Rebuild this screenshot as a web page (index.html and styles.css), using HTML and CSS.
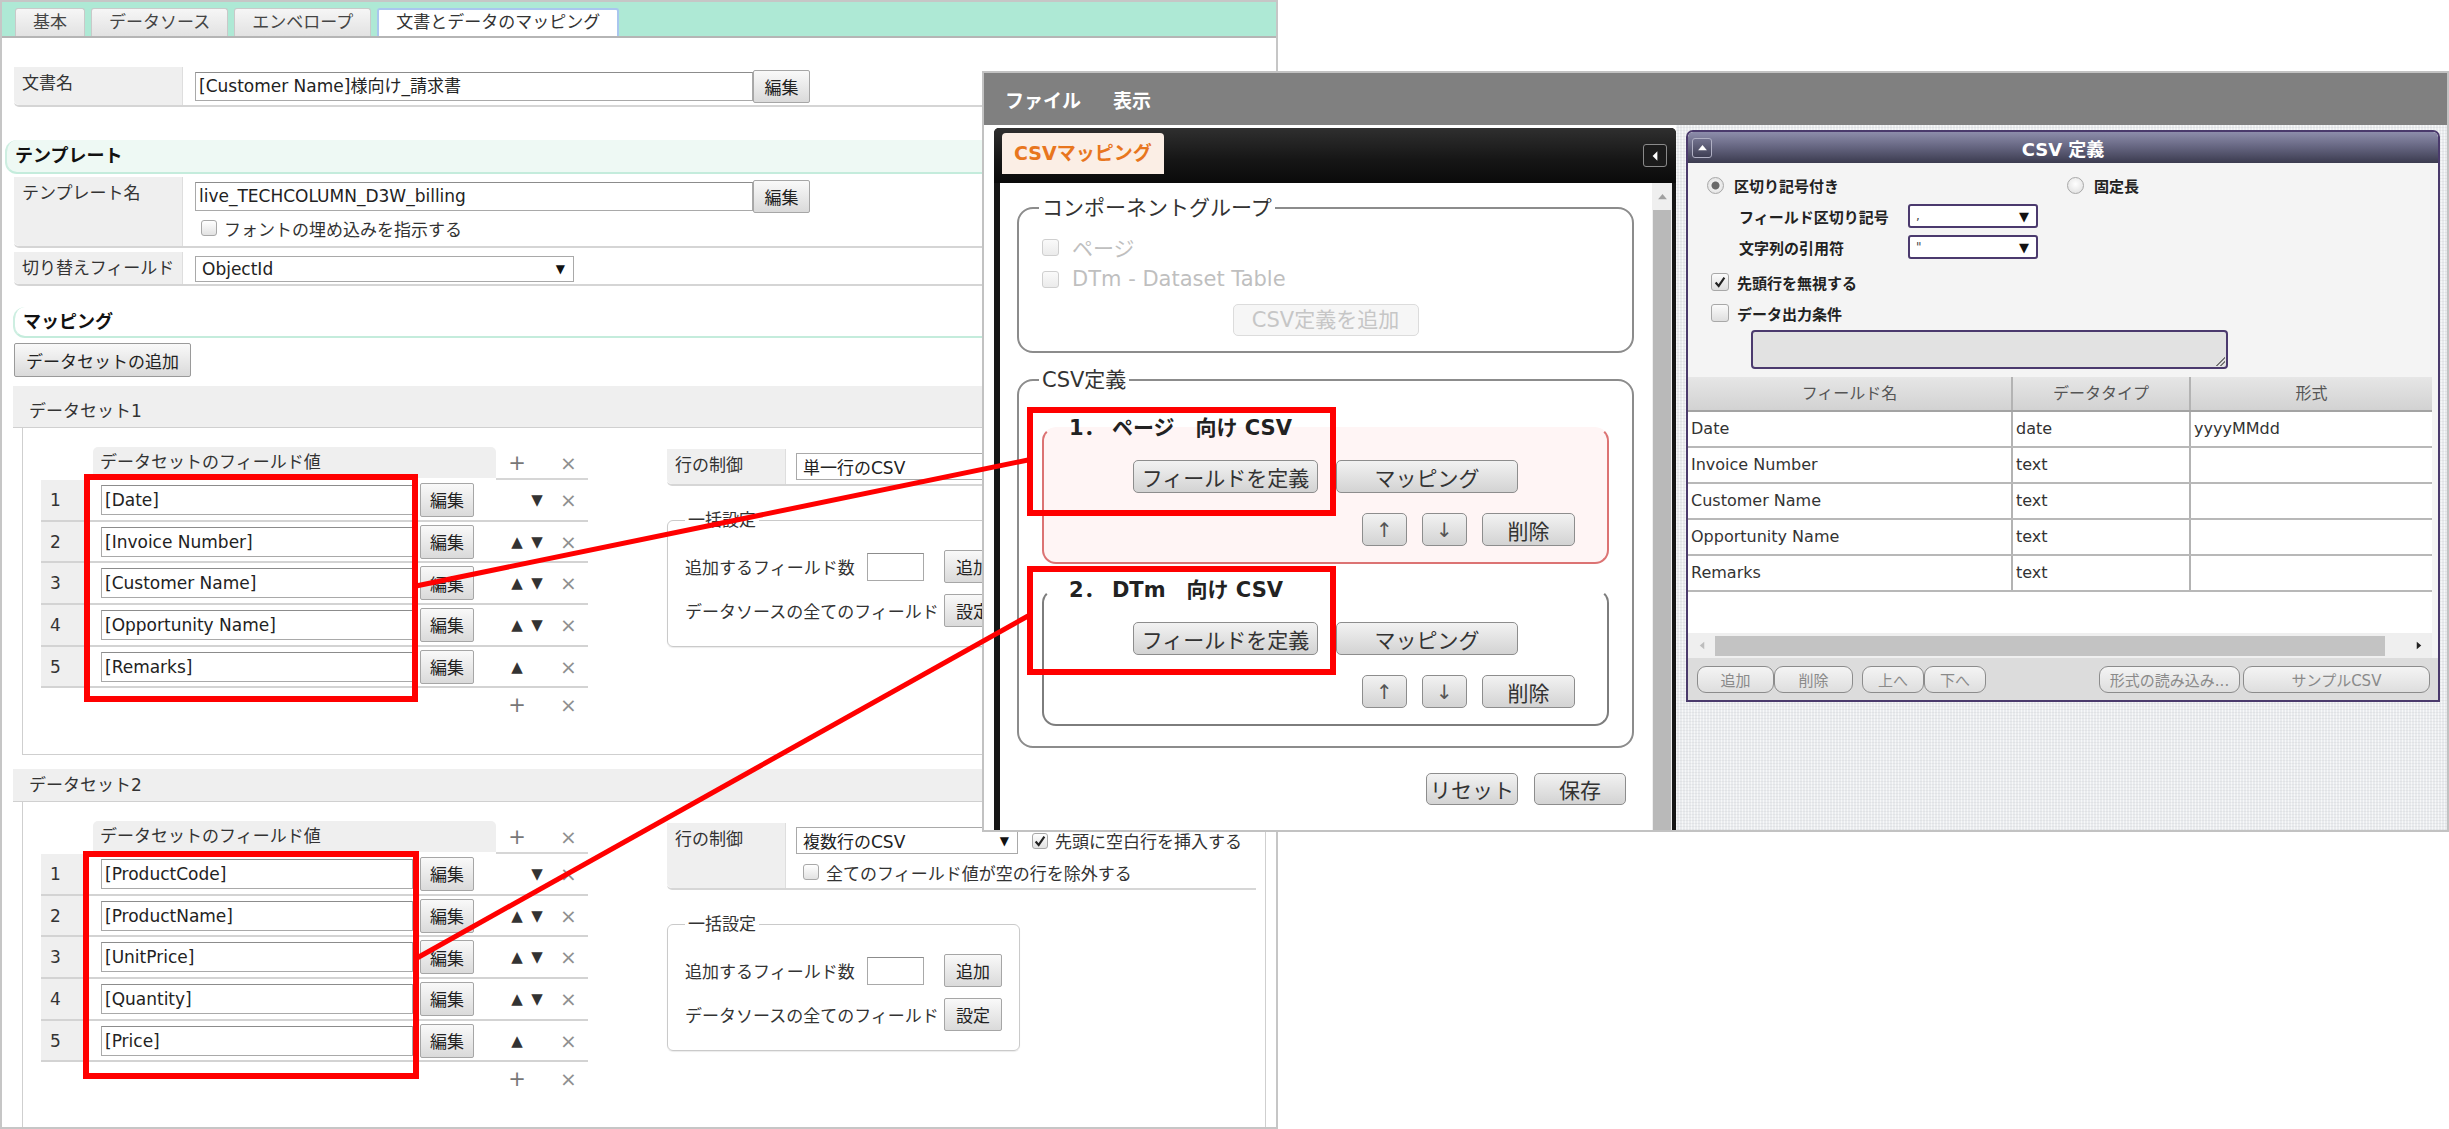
FILE: index.html
```html
<!DOCTYPE html>
<html lang="ja">
<head>
<meta charset="utf-8">
<title>文書とデータのマッピング</title>
<link rel="stylesheet" href="styles.css">
</head>
<body>
<div class="page">
  <div class="tabbar">
    <div class="tab">基本</div>
    <div class="tab">データソース</div>
    <div class="tab">エンベロープ</div>
    <div class="tab active">文書とデータのマッピング</div>
  </div>

  <div class="row r-doc">
    <div class="lbl">文書名</div>
    <div class="val">
      <div class="line"><span class="inp w558">[Customer Name]様向け_請求書</span><span class="btn b-edit">編集</span></div>
    </div>
  </div>

  <div class="sec sec-tpl">テンプレート</div>
  <div class="row r-tpl">
    <div class="lbl">テンプレート名</div>
    <div class="val">
      <div class="line"><span class="inp w558">live_TECHCOLUMN_D3W_billing</span><span class="btn b-edit">編集</span></div>
      <div class="chkline"><span class="cb"></span>フォントの埋め込みを指示する</div>
    </div>
  </div>
  <div class="row r-sw">
    <div class="lbl">切り替えフィールド</div>
    <div class="val sw"><span class="sel w379">ObjectId<span class="arr">▼</span></span></div>
  </div>

  <div class="sec sec-map">マッピング</div>
  <div class="btn b-addds">データセットの追加</div>

  <div class="ds ds1">
    <div class="ds-head">データセット1</div>
    <div class="ds-body">
      <div class="ftable">
        <div class="fhead">
          <div class="c-num"></div>
          <div class="c-main"><div class="fh-title">データセットのフィールド値</div></div>
          <div class="c-arr hline"><span class="ar ic">+</span></div>
          <div class="c-x hline"><span class="x">×</span></div>
        </div>
        <div class="frow"><div class="c-num">1</div><div class="c-main"><span class="inp fin">[Date]</span><span class="btn b-row">編集</span></div><div class="c-arr"><span class="ar"></span><span class="ar">▼</span></div><div class="c-x"><span class="x">×</span></div></div>
        <div class="frow"><div class="c-num">2</div><div class="c-main"><span class="inp fin">[Invoice Number]</span><span class="btn b-row">編集</span></div><div class="c-arr"><span class="ar">▲</span><span class="ar">▼</span></div><div class="c-x"><span class="x">×</span></div></div>
        <div class="frow"><div class="c-num">3</div><div class="c-main"><span class="inp fin">[Customer Name]</span><span class="btn b-row">編集</span></div><div class="c-arr"><span class="ar">▲</span><span class="ar">▼</span></div><div class="c-x"><span class="x">×</span></div></div>
        <div class="frow"><div class="c-num">4</div><div class="c-main"><span class="inp fin">[Opportunity Name]</span><span class="btn b-row">編集</span></div><div class="c-arr"><span class="ar">▲</span><span class="ar">▼</span></div><div class="c-x"><span class="x">×</span></div></div>
        <div class="frow"><div class="c-num">5</div><div class="c-main"><span class="inp fin">[Remarks]</span><span class="btn b-row">編集</span></div><div class="c-arr"><span class="ar">▲</span><span class="ar"></span></div><div class="c-x"><span class="x">×</span></div></div>
        <div class="ffoot"><div class="c-num"></div><div class="c-main"></div><div class="c-arr"><span class="ar ic">+</span></div><div class="c-x"><span class="x">×</span></div></div>
      </div>
      <div class="rcol">
        <div class="rowctl">
          <div class="lbl2">行の制御</div>
          <div class="rc-val">
            <div class="rc-line"><span class="sel s222">単一行のCSV<span class="arr">▼</span></span></div>
          </div>
        </div>
        <fieldset class="bulk">
          <legend>一括設定</legend>
          <div class="bk-row1"><span class="bk-lbl1">追加するフィールド数</span><span class="inp bk-inp"></span><span class="btn b-bk">追加</span></div>
          <div class="bk-row2"><span class="bk-lbl2">データソースの全てのフィールド</span><span class="btn b-bk">設定</span></div>
        </fieldset>
      </div>
    </div>
  </div>

  <div class="ds ds2">
    <div class="ds-head">データセット2</div>
    <div class="ds-body">
      <div class="ftable">
        <div class="fhead">
          <div class="c-num"></div>
          <div class="c-main"><div class="fh-title">データセットのフィールド値</div></div>
          <div class="c-arr hline"><span class="ar ic">+</span></div>
          <div class="c-x hline"><span class="x">×</span></div>
        </div>
        <div class="frow"><div class="c-num">1</div><div class="c-main"><span class="inp fin">[ProductCode]</span><span class="btn b-row">編集</span></div><div class="c-arr"><span class="ar"></span><span class="ar">▼</span></div><div class="c-x"><span class="x">×</span></div></div>
        <div class="frow"><div class="c-num">2</div><div class="c-main"><span class="inp fin">[ProductName]</span><span class="btn b-row">編集</span></div><div class="c-arr"><span class="ar">▲</span><span class="ar">▼</span></div><div class="c-x"><span class="x">×</span></div></div>
        <div class="frow"><div class="c-num">3</div><div class="c-main"><span class="inp fin">[UnitPrice]</span><span class="btn b-row">編集</span></div><div class="c-arr"><span class="ar">▲</span><span class="ar">▼</span></div><div class="c-x"><span class="x">×</span></div></div>
        <div class="frow"><div class="c-num">4</div><div class="c-main"><span class="inp fin">[Quantity]</span><span class="btn b-row">編集</span></div><div class="c-arr"><span class="ar">▲</span><span class="ar">▼</span></div><div class="c-x"><span class="x">×</span></div></div>
        <div class="frow"><div class="c-num">5</div><div class="c-main"><span class="inp fin">[Price]</span><span class="btn b-row">編集</span></div><div class="c-arr"><span class="ar">▲</span><span class="ar"></span></div><div class="c-x"><span class="x">×</span></div></div>
        <div class="ffoot"><div class="c-num"></div><div class="c-main"></div><div class="c-arr"><span class="ar ic">+</span></div><div class="c-x"><span class="x">×</span></div></div>
      </div>
      <div class="rcol">
        <div class="rowctl">
          <div class="lbl2">行の制御</div>
          <div class="rc-val">
            <div class="rc-line"><span class="sel s222">複数行のCSV<span class="arr">▼</span></span><span class="cb checked rc-cb"><svg viewBox="0 0 16 16" width="14" height="14"><path d="M3 8.5 L6.5 12.5 L13 3" fill="none" stroke="#222" stroke-width="2.4"/></svg></span>先頭に空白行を挿入する</div>
            <div class="rc-line2"><span class="cb"></span>全てのフィールド値が空の行を除外する</div>
          </div>
        </div>
        <fieldset class="bulk">
          <legend>一括設定</legend>
          <div class="bk-row1"><span class="bk-lbl1">追加するフィールド数</span><span class="inp bk-inp"></span><span class="btn b-bk">追加</span></div>
          <div class="bk-row2"><span class="bk-lbl2">データソースの全てのフィールド</span><span class="btn b-bk">設定</span></div>
        </fieldset>
      </div>
    </div>
  </div>
</div>

<div class="win">
  <div class="menubar"><span>ファイル</span><span>表示</span></div>
  <div class="winbody">
    <div class="lpanel">
      <div class="ltabs">
        <div class="ltab">CSVマッピング</div>
        <div class="collapse"><svg viewBox="0 0 10 14" width="8" height="12"><path d="M8 1 L2 7 L8 13 Z" fill="#fff"/></svg></div>
      </div>
      <div class="lcontent">
        <div class="lmain">
          <fieldset class="grp">
            <legend>コンポーネントグループ</legend>
            <div class="cbrow first"><span class="cb2"></span>ページ</div>
            <div class="cbrow"><span class="cb2"></span>DTm - Dataset Table</div>
            <div class="addbtn">CSV定義を追加</div>
          </fieldset>
          <fieldset class="csvdef">
            <legend>CSV定義</legend>
            <fieldset class="sect sect1">
              <legend class="sl">1．&nbsp;ページ　向け CSV</legend>
              <div class="sb-row1"><span class="sbtn w185">フィールドを定義</span><span class="sbtn w182">マッピング</span></div>
              <div class="sb-row2"><span class="sbtn w45 arrw">↑</span><span class="sbtn w45 arrw">↓</span><span class="sbtn w93">削除</span></div>
            </fieldset>
            <fieldset class="sect sect2">
              <legend class="sl">2．&nbsp;DTm　向け CSV</legend>
              <div class="sb-row1"><span class="sbtn w185">フィールドを定義</span><span class="sbtn w182">マッピング</span></div>
              <div class="sb-row2"><span class="sbtn w45 arrw">↑</span><span class="sbtn w45 arrw">↓</span><span class="sbtn w93">削除</span></div>
            </fieldset>
          </fieldset>
          <div class="lfoot"><span class="sbtn w92 h32">リセット</span><span class="sbtn w92 h32">保存</span></div>
        </div>
        <div class="vscroll">
          <div class="vs-up"><svg viewBox="0 0 12 8" width="11" height="7"><path d="M1 7 L6 1 L11 7 Z" fill="#a0a0a0"/></svg></div>
          <div class="vs-thumb"></div>
        </div>
      </div>
    </div>

    <div class="rarea">
      <div class="rpanel">
        <div class="rhead">
          <div class="rh-left"><span class="rh-btn"><svg viewBox="0 0 12 8" width="11" height="7"><path d="M1 7 L6 1 L11 7 Z" fill="#fff"/></svg></span></div>
          <div class="rh-title">CSV 定義</div>
          <div></div>
        </div>
        <div class="rbody">
          <div class="radrow">
            <div class="rad-item"><span class="radio on"></span>区切り記号付き</div>
            <div class="rad-item"><span class="radio"></span>固定長</div>
          </div>
          <div class="optline"><span class="opt-lbl">フィールド区切り記号</span><span class="psel"><span class="pv">,</span><span class="parr">▼</span></span></div>
          <div class="optline"><span class="opt-lbl">文字列の引用符</span><span class="psel"><span class="pv">"</span><span class="parr">▼</span></span></div>
          <div class="ckline first"><span class="cb3"><svg viewBox="0 0 16 16" width="14" height="14"><path d="M3 8.5 L6.5 12.5 L13 3" fill="none" stroke="#222" stroke-width="2.4"/></svg></span>先頭行を無視する</div>
          <div class="ckline"><span class="cb3"></span>データ出力条件</div>
          <div class="tarea"></div>
        </div>
        <div class="rtable">
          <div class="rt-head"><div>フィールド名</div><div>データタイプ</div><div>形式</div></div>
          <div class="rt-row"><div>Date</div><div>date</div><div>yyyyMMdd</div></div>
          <div class="rt-row"><div>Invoice Number</div><div>text</div><div></div></div>
          <div class="rt-row"><div>Customer Name</div><div>text</div><div></div></div>
          <div class="rt-row"><div>Opportunity Name</div><div>text</div><div></div></div>
          <div class="rt-row"><div>Remarks</div><div>text</div><div></div></div>
          <div class="rt-empty"></div>
          <div class="hscroll">
            <div class="hs-l"><svg viewBox="0 0 8 12" width="6" height="11"><path d="M7 1 L1 6 L7 11 Z" fill="#bdbdbd"/></svg></div>
            <div class="hs-thumb"></div>
            <div class="hs-r"><svg viewBox="0 0 8 12" width="6" height="11"><path d="M1 1 L7 6 L1 11 Z" fill="#222"/></svg></div>
          </div>
        </div>
        <div class="rbar">
          <span class="rb w77">追加</span><span class="rb w79">削除</span>
          <span class="rb w62 gapl">上へ</span><span class="rb w62">下へ</span>
          <span class="rb w141 push">形式の読み込み...</span><span class="rb w187 gap3">サンプルCSV</span>
        </div>
      </div>
    </div>
  </div>
</div>

<svg class="annot" width="2449" height="1129" viewBox="0 0 2449 1129">
  <g fill="none" stroke="#ff0000" stroke-width="6">
    <rect x="87" y="477" width="328" height="222"/>
    <rect x="86" y="854" width="330" height="222"/>
    <rect x="1030" y="410" width="303" height="103"/>
    <rect x="1030" y="569" width="303" height="103"/>
  </g>
  <g stroke="#ff0000" stroke-width="5">
    <line x1="416" y1="586" x2="1028" y2="460"/>
    <line x1="417" y1="958" x2="1028" y2="616"/>
  </g>
</svg>
</body>
</html>
```

FILE: styles.css
```css
html, body {
  margin: 0;
  padding: 0;
}
body {
  position: relative;
  width: 2449px;
  height: 1129px;
  overflow: hidden;
  background: #fff;
  font-family: "DejaVu Sans", "Noto Sans CJK JP", sans-serif;
  font-size: 17px;
  color: #333;
}

/* ---------- left page ---------- */
.page {
  width: 1278px;
  height: 1129px;
  box-sizing: border-box;
  border: 2px solid #c6c6c6;
  overflow: hidden;
  background: #fff;
}
.tabbar {
  height: 36px;
  box-sizing: border-box;
  background: #aee9d5;
  border-bottom: 2px solid #b5b5b5;
  display: flex;
  align-items: flex-end;
  gap: 6px;
  padding-left: 13px;
}
.tab {
  height: 28px;
  box-sizing: border-box;
  padding: 0 17px;
  line-height: 26px;
  background: linear-gradient(#f6f6f6, #e2e2e2);
  border: 1px solid #c9c9c9;
  border-bottom: none;
  border-radius: 3px 3px 0 0;
  color: #444;
  white-space: nowrap;
}
.tab.active {
  background: #fff;
  border: 2px solid #a9c6ee;
  border-bottom: none;
  line-height: 25px;
  color: #333;
}

.row {
  display: flex;
  margin: 0 8px 0 12px;
  border-bottom: 2px solid #d5d5d5;
  border-radius: 0 0 0 5px;
}
.lbl {
  width: 169px;
  flex: none;
  box-sizing: border-box;
  background: #efefef;
  border-right: 1px solid #dedede;
  padding: 4px 0 0 8px;
  line-height: 24px;
  border-radius: 0 0 0 5px;
}
.val {
  padding: 3px 0 2px 12px;
}
.val.sw {
  padding: 4px 0 2px 12px;
}
.line {
  display: flex;
  align-items: center;
  height: 33px;
}
.r-doc { margin-top: 29px; }
.r-tpl { margin-top: 3px; }
.r-tpl .val { padding-bottom: 8px; }
.r-sw { margin-top: 4px; }

.chkline {
  display: flex;
  align-items: center;
  height: 20px;
  margin-top: 5px;
  padding-left: 6px;
}

.inp {
  display: inline-block;
  box-sizing: border-box;
  height: 29px;
  border: 1px solid #a9a9a9;
  border-top-color: #8c8c8c;
  padding: 0 3px;
  line-height: 27px;
  background: #fff;
  white-space: nowrap;
  overflow: hidden;
  color: #222;
}
.w558 { width: 558px; }

.btn {
  display: inline-flex;
  align-items: center;
  justify-content: center;
  box-sizing: border-box;
  border: 1px solid #a6a6a6;
  border-radius: 2px;
  background: linear-gradient(#f9f9f9, #dadada);
  color: #222;
  white-space: nowrap;
}
.b-edit { width: 57px; height: 33px; }

.cb {
  display: inline-flex;
  align-items: center;
  justify-content: center;
  width: 16px;
  height: 16px;
  box-sizing: border-box;
  border: 1px solid #a8a8a8;
  border-radius: 3px;
  background: linear-gradient(#fff, #e2e2e2);
  margin-right: 7px;
  flex: none;
}

.sel {
  display: inline-flex;
  align-items: center;
  justify-content: space-between;
  box-sizing: border-box;
  height: 26px;
  border: 1px solid #a9a9a9;
  padding: 0 8px 0 6px;
  background: #fff;
  color: #222;
  white-space: nowrap;
}
.sel .arr {
  font-size: 12px;
  color: #111;
}
.w379 { width: 379px; }

.sec {
  height: 34px;
  box-sizing: border-box;
  line-height: 32px;
  font-size: 18px;
  font-weight: bold;
  color: #111;
  border-bottom: 2px solid #c4ecdc;
  border-left: 2px solid #cdeee1;
  border-radius: 12px 0 0 12px;
  padding-left: 8px;
}
.sec-tpl {
  margin: 33px 0 0 3px;
  background: #eef9f4;
}
.sec-map {
  margin: 21px 0 0 11px;
  height: 31px;
  line-height: 29px;
  background: #fff;
}
.b-addds {
  display: flex;
  width: 177px;
  height: 34px;
  margin: 5px 0 0 12px;
  border-color: #9a9a9a;
}

/* datasets */
.ds {
  margin: 9px 10px 0 11px;
}
.ds2 { margin-top: 14px; }
.ds-head {
  height: 42px;
  box-sizing: border-box;
  padding: 9px 0 0 16px;
  line-height: 32px;
  background: #efefef;
  border-bottom: 1px solid #d0d0d0;
}
.ds2 .ds-head {
  height: 33px;
  padding-top: 0;
}
.ds-body {
  margin-left: 9px;
  height: 327px;
  box-sizing: border-box;
  border: 1px solid #cfcfcf;
  border-top: none;
  padding: 19px 0 0 18px;
  display: flex;
  align-items: flex-start;
  background: #fff;
}
.ds2 .ds-body { height: 360px; }

.ftable { width: 547px; flex: none; }
.fhead, .frow, .ffoot {
  display: grid;
  grid-template-columns: 45px 410px 53px 39px;
}
.fhead { height: 33px; }
.fh-title {
  margin-left: 7px;
  height: 31px;
  box-sizing: border-box;
  padding-left: 7px;
  line-height: 31px;
  background: #efefef;
  border-radius: 5px 5px 0 0;
}
.hline {
  height: 33px;
  box-sizing: border-box;
  border-bottom: 2px solid #d6d6d6;
}
.frow {
  height: 41.7px;
  box-sizing: border-box;
  border-bottom: 2px solid #d3d3d3;
}
.ffoot { height: 33px; }
.c-num {
  display: flex;
  align-items: center;
  padding-left: 9px;
}
.frow .c-num { background: #efefef; }
.c-main {
  display: flex;
  align-items: center;
  padding-left: 15px;
}
.fhead .c-main { padding-left: 0; display: block; }
.fin {
  width: 312px;
  height: 30px;
  line-height: 28px;
  margin-right: 7px;
}
.b-row { width: 54px; height: 34px; }
.c-arr {
  display: flex;
  align-items: center;
  padding-left: 11px;
}
.ar {
  display: inline-block;
  width: 20px;
  text-align: center;
  font-size: 15px;
  color: #333;
}
.ar.ic {
  font-size: 21px;
  color: #777;
}
.c-x {
  display: flex;
  align-items: center;
  justify-content: center;
}
.x {
  font-size: 20px;
  color: #8f8f8f;
}

.rcol {
  margin: 2px 0 0 79px;
  width: 589px;
  flex: none;
}
.rowctl {
  display: flex;
  border-bottom: 2px solid #d6d6d6;
  border-radius: 0 0 0 5px;
}
.lbl2 {
  width: 119px;
  flex: none;
  box-sizing: border-box;
  background: #efefef;
  border-right: 1px solid #dedede;
  padding: 4px 0 0 8px;
  line-height: 24px;
  border-radius: 0 0 0 5px;
}
.rc-val { padding: 4px 0 4px 10px; }
.rc-line {
  display: flex;
  align-items: center;
  height: 27px;
  white-space: nowrap;
}
.s222 { width: 222px; height: 27px; }
.rc-cb { margin-left: 14px; }
.rc-line2 {
  display: flex;
  align-items: center;
  height: 24px;
  margin-top: 6px;
  padding-left: 7px;
  white-space: nowrap;
}

.bulk {
  margin: 22px 0 0 0;
  width: 351px;
  box-sizing: border-box;
  border: 1px solid #cacaca;
  border-radius: 6px;
  padding: 0 17px 19px 17px;
  box-shadow: 0 1px 1px rgba(0, 0, 0, 0.08);
}
.bulk legend {
  padding: 0 3px;
  line-height: 24px;
}
.bk-row1, .bk-row2 {
  display: flex;
  align-items: center;
  height: 33px;
  white-space: nowrap;
}
.bk-row1 { margin-top: 18px; }
.bk-row2 { margin-top: 11px; }
.bk-lbl1 { width: 182px; flex: none; }
.bk-lbl2 { width: 259px; flex: none; }
.bk-inp { width: 57px; height: 28px; margin-right: 20px; flex: none; }
.b-bk { width: 58px; height: 33px; flex: none; }

/* ---------- overlay window ---------- */
.win {
  position: absolute;
  left: 982px;
  top: 71px;
  width: 1467px;
  height: 761px;
  box-sizing: border-box;
  border: 2px solid #c2c2c2;
  background: #fff;
  display: flex;
  flex-direction: column;
}
.menubar {
  height: 52px;
  flex: none;
  background: #808080;
  display: flex;
  align-items: center;
  gap: 32px;
  padding-left: 21px;
  color: #fff;
  font-weight: bold;
  font-size: 19px;
}
.winbody {
  flex: 1;
  display: flex;
  min-height: 0;
}
.lpanel {
  width: 682px;
  flex: none;
  margin: 3px 0 0 10px;
  box-sizing: border-box;
  padding: 0 4px 0 6px;
  background: #161616;
  border-radius: 5px 5px 0 0;
  display: flex;
  flex-direction: column;
}
.ltabs {
  height: 50px;
  flex: none;
  display: flex;
  align-items: flex-start;
  margin: 0 -4px 0 -6px;
  padding: 5px 9px 0 8px;
  background: linear-gradient(#2f2f2f, #151515 60%, #0a0a0a);
  border-radius: 5px 5px 0 0;
}
.ltab {
  height: 41px;
  padding: 0 12px;
  line-height: 41px;
  background: #fbeee5;
  border-radius: 4px 4px 0 0;
  color: #e8761e;
  font-weight: bold;
  font-size: 19px;
  white-space: nowrap;
}
.collapse {
  margin: 11px 0 0 auto;
  width: 24px;
  height: 23px;
  box-sizing: border-box;
  border: 1px solid #8a8a8a;
  border-radius: 3px;
  background: #1b1b1b;
  display: flex;
  align-items: center;
  justify-content: center;
}
.lcontent {
  flex: 1;
  display: flex;
  background: #fff;
  min-height: 0;
}
.lmain {
  flex: 1;
  padding: 11px 18px 0 17px;
  font-size: 21px;
}
.vscroll {
  width: 20px;
  flex: none;
  background: #efefef;
  display: flex;
  flex-direction: column;
}
.vs-up {
  height: 27px;
  display: flex;
  align-items: center;
  justify-content: center;
}
.vs-thumb {
  flex: 1;
  background: #b9b9b9;
  margin: 0 1px;
}

.lmain fieldset {
  margin: 0;
  min-width: 0;
}
.lmain legend {
  font-size: 21px;
  line-height: 28px;
  padding: 0 3px;
  color: #333;
}
.grp {
  border: 2px solid #8c8c8c;
  border-radius: 16px;
  padding: 0 20px 15px;
}
.cbrow {
  display: flex;
  align-items: center;
  height: 26px;
  margin-top: 6px;
  color: #bfbfbf;
}
.cbrow.first { margin-top: 12px; }
.cb2 {
  width: 17px;
  height: 17px;
  box-sizing: border-box;
  border: 1px solid #cfcfcf;
  border-radius: 3px;
  background: linear-gradient(#fafafa, #ebebeb);
  margin: 0 13px 0 3px;
}
.addbtn {
  margin: 12px auto 0;
  width: 186px;
  height: 32px;
  box-sizing: border-box;
  border: 1px solid #dcdcdc;
  border-radius: 5px;
  background: #f6f6f6;
  color: #c6c6c6;
  text-align: center;
  line-height: 30px;
}
.lmain .csvdef {
  margin-top: 13px;
  border: 2px solid #8c8c8c;
  border-radius: 16px;
  padding: 0 23px 20px;
}
.csvdef > legend { margin-left: -3px; }
.lmain .sect {
  margin-top: 20px;
  border: 2px solid #dc7373;
  border-top-color: transparent;
  border-radius: 14px;
  padding: 0 22px 16px 22px;
  background: #fff5f5;
}
.lmain .sect2 {
  margin-top: 12px;
  border-color: #7d7d7d;
  border-top-color: transparent;
  background: #fff;
}
.lmain legend.sl {
  font-weight: bold;
  color: #222;
  white-space: nowrap;
}
.sb-row1 {
  display: flex;
  justify-content: center;
  gap: 18px;
  margin-top: 18px;
}
.sb-row2 {
  display: flex;
  justify-content: flex-end;
  gap: 15px;
  margin: 20px 10px 0 0;
}
.sbtn {
  display: inline-flex;
  align-items: center;
  justify-content: center;
  box-sizing: border-box;
  height: 33px;
  border: 1px solid #8d8d8d;
  border-radius: 5px;
  background: linear-gradient(#f2f2f2, #d3d3d3);
  color: #333;
  white-space: nowrap;
}
.arrw { color: #555; font-size: 20px; }
.w185 { width: 185px; }
.w182 { width: 182px; }
.w45 { width: 45px; }
.w93 { width: 93px; }
.w92 { width: 92px; }
.h32 { height: 32px; }
.lfoot {
  display: flex;
  justify-content: flex-end;
  gap: 16px;
  margin: 25px 8px 0 0;
}

/* right area */
.rarea {
  flex: 1;
  padding: 5px 7px 0 10px;
  background-color: #e9ebee;
  background-image:
    repeating-linear-gradient(0deg, rgba(0, 0, 0, 0.04) 0 1px, transparent 1px 3px),
    repeating-linear-gradient(90deg, rgba(255, 255, 255, 0.6) 0 1px, transparent 1px 3px);
}
.rpanel {
  width: 754px;
  height: 572px;
  box-sizing: border-box;
  border: 2px solid #4a3a6c;
  border-radius: 7px 7px 0 0;
  background: #f4f4f4;
  display: flex;
  flex-direction: column;
  overflow: hidden;
  font-size: 15px;
}
.rhead {
  height: 31px;
  flex: none;
  display: grid;
  grid-template-columns: 1fr auto 1fr;
  align-items: center;
  background: linear-gradient(#8d8dab, #64647f 50%, #3b3b4f);
  border-radius: 5px 5px 0 0;
}
.rh-btn {
  display: flex;
  align-items: center;
  justify-content: center;
  width: 20px;
  height: 20px;
  box-sizing: border-box;
  margin-left: 4px;
  border: 1px solid #b0b0c4;
  border-radius: 3px;
  background: linear-gradient(#72728e, #3e3e54);
}
.rh-title {
  color: #fff;
  font-weight: bold;
  font-size: 18px;
}
.rbody {
  flex: none;
  padding: 10px 0 0 19px;
  font-weight: bold;
  color: #222;
}
.radrow {
  display: grid;
  grid-template-columns: 360px auto;
  height: 24px;
}
.rad-item {
  display: flex;
  align-items: center;
}
.radio {
  width: 17px;
  height: 17px;
  box-sizing: border-box;
  border: 1px solid #a8a8a8;
  border-radius: 50%;
  background: radial-gradient(circle at 50% 40%, #fff, #dcdcdc);
  margin-right: 10px;
}
.radio.on {
  background: radial-gradient(circle, #6a6a6a 0 3.5px, #f0f0f0 4.5px, #d8d8d8);
}
.optline {
  display: flex;
  align-items: center;
  height: 24px;
  margin-top: 7px;
  padding-left: 32px;
}
.opt-lbl { width: 169px; flex: none; }
.psel {
  display: flex;
  align-items: center;
  justify-content: space-between;
  width: 130px;
  height: 24px;
  box-sizing: border-box;
  border: 2px solid #4b3a6e;
  border-radius: 3px;
  background: #fff;
  padding: 0 7px 0 6px;
}
.pv { font-size: 12px; font-weight: normal; color: #444; }
.parr { font-size: 13px; color: #111; }
.ckline {
  display: flex;
  align-items: center;
  height: 24px;
  margin-top: 7px;
  padding-left: 4px;
}
.ckline.first { margin-top: 11px; }
.cb3 {
  display: flex;
  align-items: center;
  justify-content: center;
  width: 18px;
  height: 18px;
  box-sizing: border-box;
  border: 1px solid #a8a8a8;
  border-radius: 3px;
  background: linear-gradient(#fbfbfb, #dedede);
  margin-right: 8px;
}
.tarea {
  margin: 5px 0 0 44px;
  width: 477px;
  height: 39px;
  box-sizing: border-box;
  border: 2px solid #4b3a6e;
  border-radius: 4px;
  background-color: #e2e2e2;
  background-image: linear-gradient(135deg, transparent 0 55%, #777 55% 62%, transparent 62% 75%, #777 75% 82%, transparent 82%);
  background-size: 10px 10px;
  background-position: right 1px bottom 1px;
  background-repeat: no-repeat;
}
.rtable {
  margin-top: 8px;
  width: 744px;
  background: #fff;
  font-size: 16px;
}
.rt-head, .rt-row {
  display: grid;
  grid-template-columns: 325px 178px 241px;
  box-sizing: border-box;
}
.rt-head {
  height: 35px;
  background: linear-gradient(#e6e6e6, #d2d2d2);
  border-bottom: 2px solid #a3a3a3;
  color: #555;
  text-align: center;
  line-height: 33px;
}
.rt-head > div, .rt-row > div {
  border-right: 2px solid #b3b3b3;
}
.rt-head > div:last-child, .rt-row > div:last-child { border-right: none; }
.rt-row {
  height: 36px;
  border-bottom: 2px solid #b8b8b8;
  line-height: 34px;
  color: #333;
}
.rt-row > div {
  padding-left: 3px;
  white-space: nowrap;
}
.rt-empty { height: 41px; }
.hscroll {
  height: 25px;
  display: flex;
  align-items: center;
  background: #efefef;
}
.hs-l {
  width: 27px;
  display: flex;
  justify-content: center;
}
.hs-thumb {
  flex: 1;
  height: 20px;
  background: #c3c3c3;
}
.hs-r {
  width: 47px;
  display: flex;
  justify-content: flex-end;
  padding-right: 10px;
  box-sizing: border-box;
}
.rbar {
  height: 42px;
  flex: none;
  display: flex;
  align-items: center;
  padding: 0 8px 0 9px;
  background: #dcdcdc;
}
.rb {
  display: inline-flex;
  align-items: center;
  justify-content: center;
  box-sizing: border-box;
  height: 27px;
  border: 1.5px solid #8c8c8c;
  border-radius: 9px;
  background: linear-gradient(#f4f4f4, #dedede);
  color: #8a8a8a;
  font-size: 15px;
  white-space: nowrap;
}
.w77 { width: 77px; }
.w79 { width: 79px; }
.w62 { width: 62px; }
.w141 { width: 141px; }
.w187 { width: 187px; }
.gapl { margin-left: 9px; }
.push { margin-left: auto; }
.gap3 { margin-left: 3px; }

.annot {
  position: absolute;
  left: 0;
  top: 0;
  pointer-events: none;
}
```
